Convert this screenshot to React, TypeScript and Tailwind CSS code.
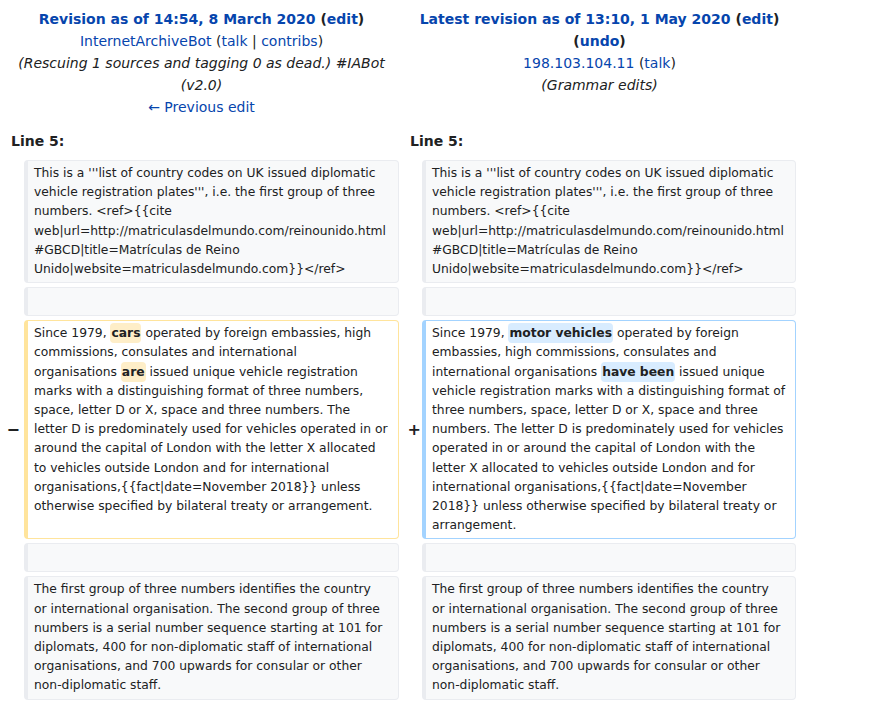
const link = "text-[#0645ad]";

type Kind = "ctx" | "del" | "add";

const Hl = ({ kind, children }: { kind: Kind; children: React.ReactNode }) => (
  <span
    className={`font-bold rounded-[4px] px-[1px] py-[3px] ${kind === "del" ? "bg-[#feeec8]" : "bg-[#d8ecff]"}`}
  >
    {children}
  </span>
);

const Cell = ({ kind = "ctx", lines }: { kind?: Kind; lines?: React.ReactNode[] }) => {
  const tone =
    kind === "del"
      ? "bg-white border-[#ffe49c]"
      : kind === "add"
        ? "bg-white border-[#a3d3ff]"
        : "bg-[#f8f9fa] border-[#eaecf0]";
  return (
    <div
      className={`border border-l-4 rounded-[4px] px-[6px] py-[3px] text-[12.32px] leading-[19.2px] ${tone} ${
        lines ? "" : "h-[29px]"
      }`}
    >
      {lines?.map((l, i) => (
        <div key={i} className="whitespace-nowrap">
          {l}
        </div>
      ))}
    </div>
  );
};

const Row = ({
  left,
  right,
  marks = false,
}: {
  left: React.ReactNode;
  right: React.ReactNode;
  marks?: boolean;
}) => (
  <div className="grid grid-cols-[24px_375px_23px_374px]">
    <div className="flex items-center justify-end pr-[4px] text-[16px] font-bold">{marks ? "−" : ""}</div>
    {left}
    <div className="flex items-center justify-end pr-[1px] text-[16px] font-bold">{marks ? "+" : ""}</div>
    {right}
  </div>
);

const intro = [
  "This is a '''list of country codes on UK issued diplomatic",
  "vehicle registration plates''', i.e. the first group of three",
  "numbers. <ref>{{cite",
  "web|url=http://matriculasdelmundo.com/reinounido.html",
  "#GBCD|title=Matrículas de Reino",
  "Unido|website=matriculasdelmundo.com}}</ref>",
];

const outro = [
  "The first group of three numbers identifies the country",
  "or international organisation. The second group of three",
  "numbers is a serial number sequence starting at 101 for",
  "diplomats, 400 for non-diplomatic staff of international",
  "organisations, and 700 upwards for consular or other",
  "non-diplomatic staff.",
];

const oldLines = [
  <>
    Since 1979, <Hl kind="del">cars</Hl> operated by foreign embassies, high
  </>,
  "commissions, consulates and international",
  <>
    organisations <Hl kind="del">are</Hl> issued unique vehicle registration
  </>,
  "marks with a distinguishing format of three numbers,",
  "space, letter D or X, space and three numbers. The",
  "letter D is predominately used for vehicles operated in or",
  "around the capital of London with the letter X allocated",
  "to vehicles outside London and for international",
  "organisations,{{fact|date=November 2018}} unless",
  "otherwise specified by bilateral treaty or arrangement.",
];

const newLines = [
  <>
    Since 1979, <Hl kind="add">motor vehicles</Hl> operated by foreign
  </>,
  "embassies, high commissions, consulates and",
  <>
    international organisations <Hl kind="add">have been</Hl> issued unique
  </>,
  "vehicle registration marks with a distinguishing format of",
  "three numbers, space, letter D or X, space and three",
  "numbers. The letter D is predominately used for vehicles",
  "operated in or around the capital of London with the",
  "letter X allocated to vehicles outside London and for",
  "international organisations,{{fact|date=November",
  "2018}} unless otherwise specified by bilateral treaty or",
  "arrangement.",
];

export default function App() {
  return (
    <div className="w-[874px] min-h-[705px] bg-white text-[#202122] font-['DejaVu_Sans',sans-serif]">
      <div className="w-[800px] pt-[8px]">
        {/* revision titles */}
        <div className="grid grid-cols-[399px_397px] text-center text-[14px] leading-[22px]">
          <div className="pl-[4px]">
            <div className="font-bold">
              <a className={link}>Revision as of 14:54, 8 March 2020</a> (<a className={link}>edit</a>)
            </div>
            <div>
              <a className={link}>InternetArchiveBot</a> (<a className={link}>talk</a> |{" "}
              <a className={link}>contribs</a>)
            </div>
            <div className="italic px-[10px]">(Rescuing 1 sources and tagging 0 as dead.) #IABot (v2.0)</div>
            <div>
              <a className={link}>← Previous edit</a>
            </div>
          </div>
          <div className="pl-[4px]">
            <div className="font-bold">
              <a className={link}>Latest revision as of 13:10, 1 May 2020</a> (<a className={link}>edit</a>)
              <br />(<a className={link}>undo</a>)
            </div>
            <div>
              <a className={link}>198.103.104.11</a> (<a className={link}>talk</a>)
            </div>
            <div className="italic">(Grammar edits)</div>
          </div>
        </div>

        <div className="grid grid-cols-[399px_397px] mt-[12px] text-[14px] leading-[22px] font-bold">
          <div className="pl-[11px]">Line 5:</div>
          <div className="pl-[11px]">Line 5:</div>
        </div>

        <div className="flex flex-col gap-[4px] mt-[8px]">
          <Row left={<Cell lines={intro} />} right={<Cell lines={intro} />} />
          <Row left={<Cell />} right={<Cell />} />
          <Row marks left={<Cell kind="del" lines={oldLines} />} right={<Cell kind="add" lines={newLines} />} />
          <Row left={<Cell />} right={<Cell />} />
          <Row left={<Cell lines={outro} />} right={<Cell lines={outro} />} />
        </div>
      </div>
    </div>
  );
}
